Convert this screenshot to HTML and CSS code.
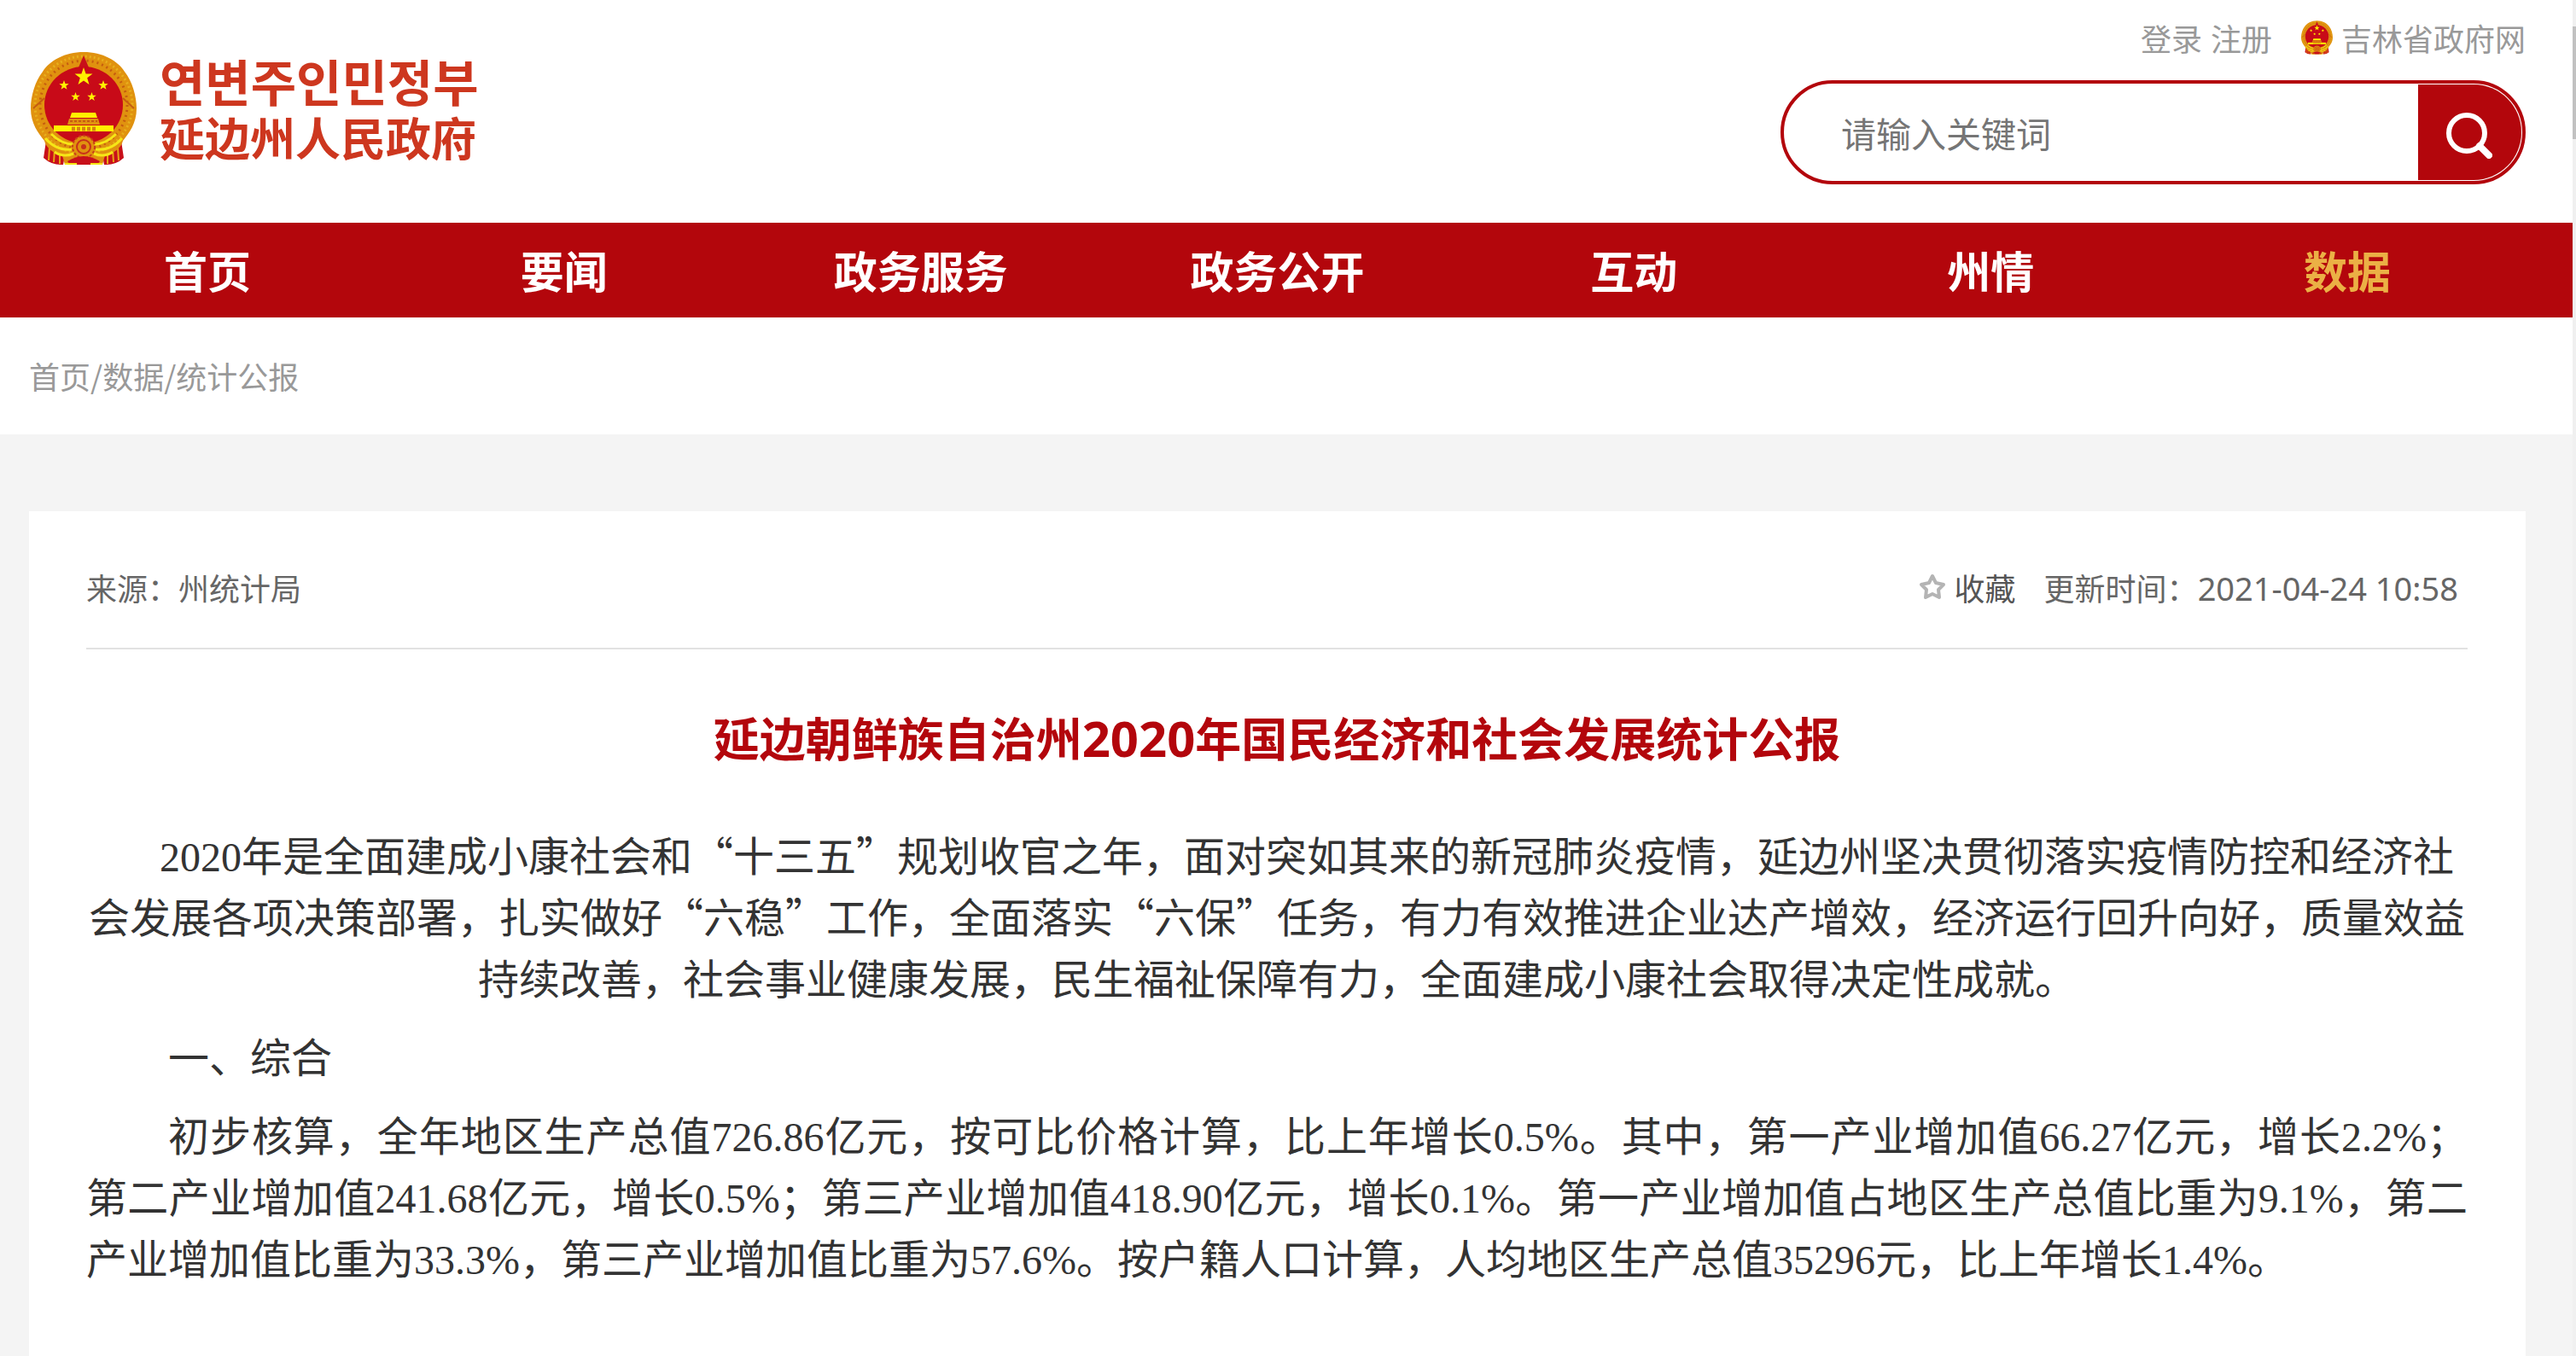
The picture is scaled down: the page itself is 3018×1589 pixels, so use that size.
FILE: index.html
```
<!DOCTYPE html>
<html lang="zh-CN">
<head>
  <meta charset="UTF-8">
  <title>延边朝鲜族自治州2020年国民经济和社会发展统计公报</title>
  <link rel="stylesheet" href="styles.css">
</head>
<body>
  <svg class="defs" width="0" height="0" aria-hidden="true">
    <symbol id="star" viewBox="-10 -10 20 20">
      <polygon points="0,-10 2.35,-3.24 9.51,-3.09 3.8,1.24 5.88,8.09 0,4 -5.88,8.09 -3.8,1.24 -9.51,-3.09 -2.35,-3.24"/>
    </symbol>
    <symbol id="emblem" viewBox="0 0 124 133">
      <!-- ribbons -->
      <path d="M18 104L15 124Q25 133 38 132L42 110ZM106 104L109 124Q99 133 86 132L82 110Z" fill="#c8101a"/>
      <path d="M22 112L21 127M28 114L27 129M34 116L34 131M102 112L103 127M96 114L97 129M90 116L90 131" stroke="#e8a414" stroke-width="2"/>
      <!-- wreath -->
      <path d="M62 0C84 0 102 10 110 23C119 34 124 52 124 66C124 84 115 95 108 104C106 112 98 119 87 121L84 132H40L37 121C26 119 18 112 16 104C9 95 0 84 0 66C0 52 5 34 14 23C22 10 40 0 62 0Z" fill="#e0920f"/>
      <ellipse cx="62" cy="62" rx="57" ry="57" fill="none" stroke="#e8b01c" stroke-width="3" stroke-dasharray="2 3"/>
      <ellipse cx="62" cy="62" rx="51" ry="52" fill="none" stroke="#c65d10" stroke-width="3" stroke-dasharray="2 4"/>
      <path d="M62 4L56 18H68Z" fill="#c8101a"/>
      <path d="M3 66L16 54M121 66L108 54" stroke="#c65d10" stroke-width="2"/>
      <ellipse cx="62" cy="62" rx="46" ry="45" fill="#c80a18"/>
      <path d="M17 101Q30 116 48 114M107 101Q94 116 76 114M24 96Q36 108 50 108M100 96Q88 108 74 108M28 117Q38 124 50 119M96 117Q86 124 74 119" fill="none" stroke="#f6e616" stroke-width="3"/>
      <!-- gear -->
      <circle cx="62" cy="111" r="13" fill="#e0920f" stroke="#c8401a" stroke-width="2" stroke-dasharray="3 2"/>
      <circle cx="62" cy="111" r="8" fill="none" stroke="#c8301a" stroke-width="2"/>
      <circle cx="62" cy="111" r="3" fill="#c8301a"/>
      <path d="M43 128Q62 116 81 128L78 132H46Z" fill="#c8101a"/>
      <path d="M40 131H54M70 131H84" stroke="#f6e616" stroke-width="2"/>
      <!-- gate -->
      <path d="M48 71H76L78 77H46Z" fill="#fff200"/>
      <path d="M45 78H79L81 85H43Z" fill="#e0920f"/>
      <path d="M46 81H78" stroke="#c65d10" stroke-width="2" stroke-dasharray="3 2"/>
      <path d="M27 86H97V93H27Z" fill="#fff200"/>
      <path d="M48 90H76" stroke="#d9850f" stroke-width="5" stroke-dasharray="4 2"/>
      <g fill="#fff200">
        <use href="#star" x="51" y="18" width="22" height="22"/>
        <use href="#star" x="33" y="33" width="12" height="12"/>
        <use href="#star" x="79" y="33" width="12" height="12"/>
        <use href="#star" x="47" y="47" width="11" height="11"/>
        <use href="#star" x="66" y="47" width="11" height="11"/>
      </g>
    </symbol>
  </svg>

  <header class="header">
    <a class="logo" href="#">
      <svg class="logo-emblem"><use href="#emblem"/></svg>
      <span class="logo-text">
        <span class="logo-kr" lang="ko">연변주인민정부</span>
        <span class="logo-cn">延边州人民政府</span>
      </span>
    </a>
    <div class="header-right">
      <div class="top-links">
        <a href="#">登录</a>
        <a href="#">注册</a>
        <a class="province" href="#"><svg class="province-icon"><use href="#emblem"/></svg>吉林省政府网</a>
      </div>
      <form class="search">
        <input type="text" name="keyword" placeholder="请输入关键词" aria-label="请输入关键词">
        <button type="submit" aria-label="搜索">
          <svg width="54" height="54" viewBox="0 0 54 54" fill="none" stroke="#fff">
            <circle cx="24" cy="24" r="21" stroke-width="6"/>
            <path d="M39 39L50 50" stroke-width="8" stroke-linecap="round"/>
          </svg>
        </button>
      </form>
    </div>
  </header>

  <nav class="nav">
    <a href="#">首页</a>
    <a href="#">要闻</a>
    <a href="#">政务服务</a>
    <a href="#">政务公开</a>
    <a href="#">互动</a>
    <a href="#">州情</a>
    <a class="active" href="#">数据</a>
  </nav>

  <div class="crumbs"><a href="#">首页</a>/<a href="#">数据</a>/<a href="#">统计公报</a></div>

  <main class="main">
    <article class="card">
      <div class="meta">
        <span class="source">来源：州统计局</span>
        <button class="collect" type="button">
          <svg width="32" height="32" viewBox="0 0 32 32" fill="none" stroke="#b4b4b4" stroke-width="4" stroke-linejoin="round">
            <path d="M16 3L20 11L29 13L23 19L24 28L16 24L8 28L9 19L3 13L12 11Z"/>
          </svg>收藏
        </button>
        <span class="time">更新时间：<span class="date">2021-04-24 10:58</span></span>
      </div>

      <h1 class="title">延边朝鲜族自治州<span class="year">2020</span>年国民经济和社会发展统计公报</h1>

      <div class="content">
        <p class="lead"><span class="num">2020</span>年是全面建成小康社会和“十三五”规划收官之年，面对突如其来的新冠肺炎疫情，延边州坚决贯彻落实疫情防控和经济社会发展各项决策部署，扎实做好“六稳”工作，全面落实“六保”任务，有力有效推进企业达产增效，经济运行回升向好，质量效益持续改善，社会事业健康发展，民生福祉保障有力，全面建成小康社会取得决定性成就。</p>
        <p>一、综合</p>
        <p>初步核算，全年地区生产总值<span class="num">726.86</span>亿元，按可比价格计算，比上年增长<span class="num">0.5%</span>。其中，第一产业增加值<span class="num">66.27</span>亿元，增长<span class="num">2.2%</span>；第二产业增加值<span class="num">241.68</span>亿元，增长<span class="num">0.5%</span>；第三产业增加值<span class="num">418.90</span>亿元，增长<span class="num">0.1%</span>。第一产业增加值占地区生产总值比重为<span class="num">9.1%</span>，第二产业增加值比重为<span class="num">33.3%</span>，第三产业增加值比重为<span class="num">57.6%</span>。按户籍人口计算，人均地区生产总值<span class="num">35296</span>元，比上年增长<span class="num">1.4%</span>。</p>
      </div>
    </article>
  </main>

  <div class="scrollbar" aria-hidden="true"><div class="thumb"></div></div>
</body>
</html>
```
FILE: styles.css
```
* {
  box-sizing: border-box;
  margin: 0;
  padding: 0;
}

body {
  display: flex;
  flex-direction: column;
  min-height: 100vh;
  padding-right: 4px;
  font-family: "Noto Sans CJK SC", sans-serif;
  font-size: 36px;
  color: #666;
  background: #fff;
  text-spacing-trim: space-all;
}

a {
  color: inherit;
  text-decoration: none;
}

.defs {
  position: absolute;
}

/* header */
.header {
  display: flex;
  justify-content: space-between;
  padding: 18px 55px 45px 36px;
}

.logo {
  display: flex;
  align-items: flex-start;
  gap: 27px;
  height: 133px;
  margin-top: 43px;
  color: #cd371f;
}

.logo-emblem {
  width: 124px;
  height: 133px;
}

.logo-text {
  display: flex;
  flex-direction: column;
  font-size: 53px;
  font-weight: bold;
  line-height: 66px;
}

.logo-kr {
  font-family: "Noto Sans CJK KR", sans-serif;
  font-size: 58px;
}

.header-right {
  display: flex;
  flex-direction: column;
  align-items: flex-end;
  width: 30%;
  gap: 24px;
}

.top-links {
  display: flex;
  gap: 10px;
  color: #999;
  line-height: 52px;
}

.province {
  display: flex;
  align-items: center;
  gap: 10px;
  margin-left: 24px;
}

.province-icon {
  width: 37px;
  height: 40px;
}

.search {
  display: flex;
  width: 873px;
  max-width: 100%;
  height: 122px;
  padding: 1px;
  border: 4px solid #b3060c;
  border-radius: 61px;
  overflow: hidden;
}

.search input {
  flex: 1;
  min-width: 0;
  padding-left: 66px;
  border: none;
  outline: none;
  background: none;
  font-family: inherit;
  font-size: 41px;
}

.search input::placeholder {
  color: #757575;
}

.search button {
  display: flex;
  align-items: center;
  width: 121px;
  padding: 8px 0 0 33px;
  border: none;
  border-radius: 0 56px 56px 0;
  background: #b3060c;
  cursor: pointer;
}

/* nav */
.nav {
  display: flex;
  padding: 0 55px 0 34px;
  background: #b3060c;
  color: #fff;
  font-size: 51px;
  font-weight: bold;
  line-height: 111px;
}

.nav a {
  flex: 1;
  text-align: center;
}

.nav .active {
  color: #ebb045;
}

.crumbs {
  padding: 0 34px;
  color: #999;
  line-height: 137px;
}

/* article */
.main {
  display: flex;
  flex: 1;
  padding: 90px 55px 0 34px;
  background: #f4f4f4;
}

.card {
  flex: 1;
  padding: 24px 68px 0 67px;
  background: #fff;
}

.meta {
  display: flex;
  align-items: center;
  height: 138px;
  padding: 0 11px 6px 0;
  border-bottom: 2px solid #e2e2e2;
}

.collect {
  display: flex;
  align-items: center;
  gap: 10px;
  margin: 0 33px 0 auto;
  border: none;
  background: none;
  color: #555;
  font-family: inherit;
  font-size: 36px;
  cursor: pointer;
}

.date {
  font-family: "Noto Sans", sans-serif;
  font-size: 38px;
}

.title {
  padding-top: 63px;
  color: #b3060c;
  font-size: 54px;
  line-height: 80px;
  text-align: center;
}

.year {
  font-family: "Noto Sans", sans-serif;
  font-size: 58px;
  line-height: 1;
}

.content {
  padding-top: 60px;
  color: #333;
  font-size: 48px;
  line-height: 72px;
  text-align: justify;
}

.content p {
  margin-bottom: 20px;
  text-indent: 2em;
}

.content .lead {
  text-align: center;
  text-indent: 70px;
}

.num {
  font-family: "Liberation Serif", serif;
  line-height: 1;
}

/* page scrollbar strip */
.scrollbar {
  position: fixed;
  top: 0;
  right: 0;
  width: 4px;
  height: 100%;
  padding-top: 31px;
  background: #f0f0f0;
}

.thumb {
  height: 132px;
  background: #c1c1c1;
}
```
